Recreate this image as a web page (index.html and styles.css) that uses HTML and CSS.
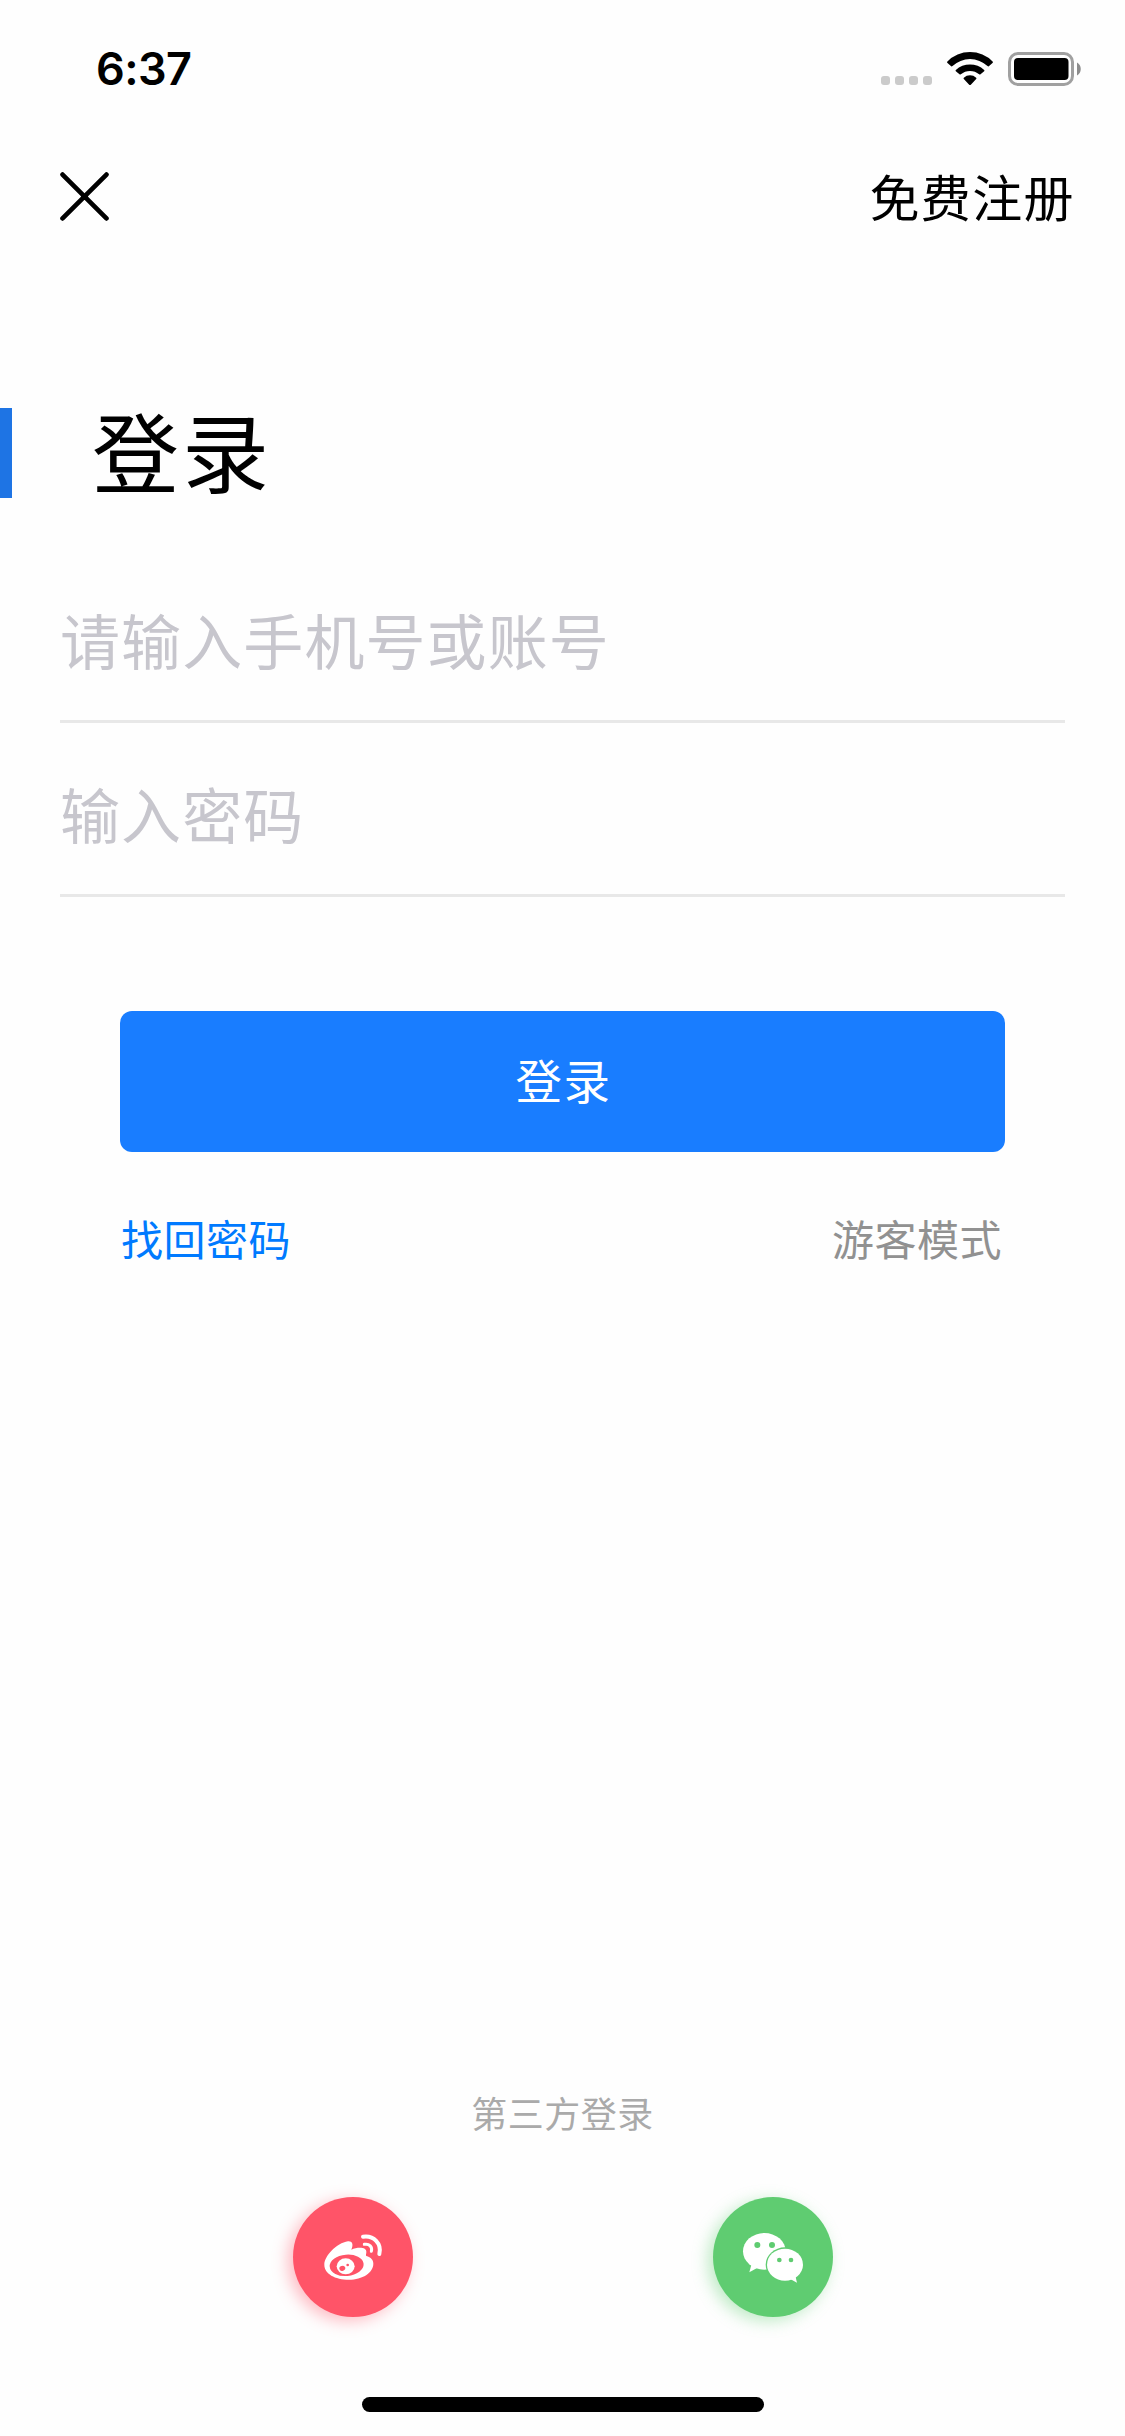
FILE: index.html
```html
<!DOCTYPE html>
<html lang="zh-CN">
<head>
<meta charset="utf-8">
<title>登录</title>
<link rel="stylesheet" href="styles.css">
</head>
<body>
<div class="screen">
  <header class="status">
    <span class="time">6:37</span>
    <div class="indicators">
      <div class="dots"><i></i><i></i><i></i><i></i></div>
      <svg class="wifi" viewBox="0 0 137 99"><path d="M0 29A96 96 0 0 1 137 29Q138 31 136 33L125 43Q123 44 121 42A77 77 0 0 0 16 42Q14 44 12 43L1 33Q-1 31 0 29ZM26 54A62 62 0 0 1 111 54Q113 56 111 58L100 67Q98 68 96 67A42 42 0 0 0 41 67Q39 68 37 67L26 58Q24 56 26 54ZM50 77A28 28 0 0 1 87 77Q89 79 87 81L71 98Q68.500 100 66 98L50 81Q48 79 50 77Z"/></svg>
      <svg class="battery" viewBox="0 0 74 34"><rect x="1.500" y="1.500" width="63" height="31" rx="8.500" fill="none" stroke="#a0a0a0" stroke-width="3"/><rect x="6" y="6" width="54.500" height="22" rx="4" fill="#000"/><path d="M69 10.500C74 13 74 21 69 23.500Z" fill="#8c8c8c"/></svg>
    </div>
  </header>
  <nav class="nav">
    <svg class="close" viewBox="0 0 48 48"><path d="M2.500 2.500L45.500 45.500M45.500 2.500L2.500 45.500"/></svg>
    <a class="register">免费注册</a>
  </nav>
  <div class="heading">
    <span class="accent"></span>
    <h1 class="title">登录</h1>
  </div>
  <main class="form">
    <div class="field">请输入手机号或账号</div>
    <div class="field">输入密码</div>
    <div class="actions">
      <button class="submit" type="button">登录</button>
      <div class="links">
        <a class="recover">找回密码</a>
        <a class="guest">游客模式</a>
      </div>
    </div>
  </main>
  <footer class="third">
    <p class="caption">第三方登录</p>
    <div class="socials">
      <a class="social weibo">
        <svg viewBox="0 0 360 360">
          <path fill="#fff" d="M94 203C94 178 130 138 165 133C178 132 182 142 175 158C195 149 222 150 220 166C220 172 217 174 220 177C234 181 241 189 241 200C241 227 208 248 168 248C126 248 94 230 94 203Z"/>
          <ellipse cx="161" cy="205" rx="51" ry="32" fill="#ff5468" transform="rotate(-5 161 205)"/>
          <ellipse cx="158" cy="208" rx="27" ry="24" fill="#fff"/>
          <ellipse cx="148" cy="214" rx="9" ry="7.500" fill="#ff5468" transform="rotate(-20 148 214)"/>
          <circle cx="164" cy="204" r="4" fill="#ff5468"/>
          <g fill="none" stroke="#fff" stroke-linecap="round"><path stroke-width="12" d="M210 119C242 114 267 140 259 171"/><path stroke-width="9" d="M214 142C229 139 239 150 235 163"/></g>
        </svg>
      </a>
      <a class="social wechat">
        <svg viewBox="0 0 360 360">
          <path fill="#fff" d="M115 204L109 226L131 214Z"/>
          <ellipse cx="154" cy="163" rx="64" ry="55" fill="#fff"/>
          <ellipse cx="216" cy="203" rx="58" ry="52" fill="#5fcc71"/>
          <ellipse cx="216" cy="203" rx="54" ry="48" fill="#fff"/>
          <path fill="#fff" d="M233 247L252 257L247 236Z"/>
          <g fill="#5fcc71"><circle cx="133" cy="144" r="9"/><circle cx="177" cy="144" r="9"/><circle cx="199" cy="189" r="7"/><circle cx="234" cy="189" r="7"/></g>
        </svg>
      </a>
    </div>
  </footer>
  <div class="home"></div>
</div>
</body>
</html>
```
FILE: styles.css
```css
* { box-sizing: border-box; margin: 0; padding: 0; }
body { background: #fefefe; }
.screen {
  width: 1125px;
  height: 2436px;
  display: flex;
  flex-direction: column;
  font-family: "Noto Sans CJK SC", sans-serif;
  color: #000;
}
.status {
  height: 132px;
  padding: 44px 43px 0 96px;
  display: flex;
  justify-content: space-between;
  align-items: flex-start;
}
.time {
  font: 600 45px/50px Inter, sans-serif;
  letter-spacing: -.6px;
}
.indicators {
  display: flex;
  align-items: flex-end;
  height: 42px;
}
.dots { display: flex; gap: 5px; margin-right: 15px; padding-bottom: 1px; }
.dots i { width: 9px; height: 9px; border-radius: 3px; background: #cbcbcb; }
.wifi { width: 46px; height: 33px; margin-bottom: 1px; margin-right: 15px; overflow: visible; }
.battery { width: 74px; height: 34px; }
.nav {
  height: 128px;
  padding: 0 50px 0 60px;
  display: flex;
  justify-content: space-between;
  align-items: center;
}
.close { width: 49px; height: 49px; fill: none; stroke: #000; stroke-width: 4.6; stroke-linecap: round; }
.register { font-size: 50px; line-height: 60px; letter-spacing: 1.4px; margin-top: -2px; }
.heading {
  height: 90px;
  margin-top: 148px;
  display: flex;
  align-items: center;
}
.accent { width: 12px; height: 90px; background: #1e74e4; }
.title { margin: -9px 0 0 80px; font-size: 87px; line-height: 100px; font-weight: 400; letter-spacing: 3px; }
.form { padding: 51px 60px 0; }
.field {
  height: 174px;
  padding-top: 50px;
  border-bottom: 3px solid #e8e8e8;
  color: #c7c6cd;
  font-size: 60px;
  line-height: 80px;
  letter-spacing: 1.1px;
}
.actions { padding: 114px 60px 0; }
.submit {
  display: block;
  width: 100%;
  height: 141px;
  padding: 0 0 6px 2px;
  border: 0;
  border-radius: 12px;
  background: #197dff;
  color: #fff;
  font: 400 46.5px/72px "Noto Sans CJK SC", sans-serif;
  letter-spacing: 1.5px;
}
.links {
  margin-top: 56px;
  display: flex;
  justify-content: space-between;
  font-size: 42px;
  line-height: 60px;
  letter-spacing: .5px;
}
.recover { color: #007aff; margin-left: 1px; }
.guest { color: #919191; margin-right: 3px; }
.third { margin-top: auto; }
.caption { text-align: center; font-size: 36px; line-height: 50px; letter-spacing: .5px; color: #aaa; }
.socials { margin-top: 60px; padding: 0 292px 0 293px; display: flex; justify-content: space-between; }
.social { width: 120px; height: 120px; border-radius: 50%; }
.social svg { display: block; width: 120px; height: 120px; }
.weibo { background: #ff5468; box-shadow: -5px 4px 16px rgba(255, 84, 104, .4); }
.wechat { background: #5fcc71; box-shadow: -5px 4px 16px rgba(95, 204, 113, .4); }
.home { width: 402px; height: 15px; margin: 80px 0 24px 362px; border-radius: 8px; background: #000; }
```
